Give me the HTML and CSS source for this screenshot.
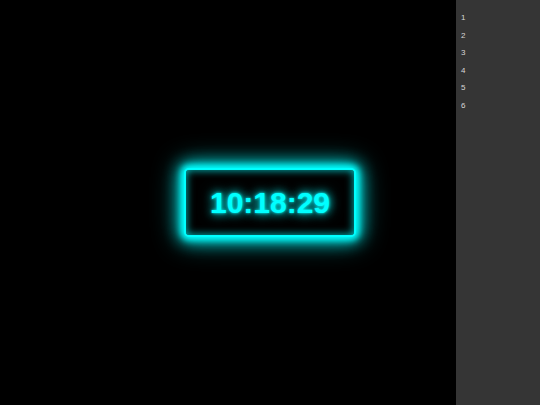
FILE: index.html
```html
<!DOCTYPE html>
<html>
<head>
<meta charset="utf-8">
<link rel="stylesheet" href="styles.css">
</head>
<body>
<main class="stage">
  <div class="clock">10:18:29</div>
</main>
<aside class="sidebar">
  <ol class="list">
    <li>1</li>
    <li>2</li>
    <li>3</li>
    <li>4</li>
    <li>5</li>
    <li>6</li>
  </ol>
</aside>
</body>
</html>
```
FILE: styles.css
```css
html, body {
  margin: 0;
  padding: 0;
  height: 100%;
  background: #000;
}
body {
  font-family: "Liberation Sans", Arial, sans-serif;
}
.stage {
  height: 100%;
  display: flex;
  align-items: center;
  justify-content: center;
}
.clock {
  box-sizing: border-box;
  width: 172px;
  height: 69px;
  border: 2px solid #00ffff;
  border-radius: 5px;
  background: #000;
  display: flex;
  align-items: center;
  justify-content: center;
  color: #00ffff;
  font-weight: bold;
  font-size: 30px;
  text-shadow: 0 0 3px #00ffff, 0 0 8px #00dddd, 0 0 14px #009999;
  box-shadow: 0 0 6px 3px #00ffff, 0 0 16px 5px #00d0d0, 0 0 28px 4px #007777, inset 0 0 8px #00cccc;
}
.sidebar {
  position: fixed;
  top: 0;
  right: 0;
  width: 84px;
  height: 100%;
  background: #353535;
}
.list {
  list-style: none;
  margin: 0;
  padding: 12px 0 0 5px;
  font-size: 8px;
  color: #d8d8d8;
}
.list li {
  height: 17.6px;
  line-height: 12px;
}
```
